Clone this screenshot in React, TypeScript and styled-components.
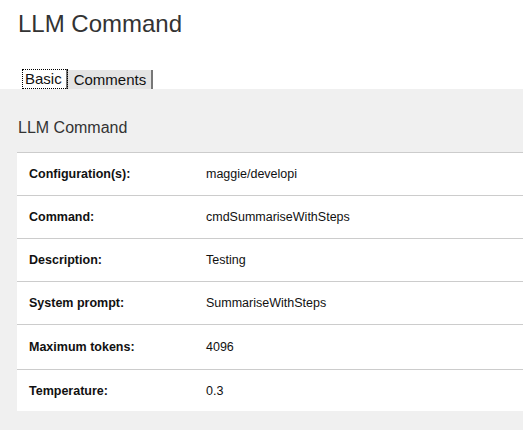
import styled, { createGlobalStyle } from 'styled-components';

const GlobalStyle = createGlobalStyle`
  html, body {
    margin: 0;
    padding: 0;
    background: #fff;
    font-family: "Liberation Sans", Arial, sans-serif;
    color: #222;
  }
`;

const rows = [
  { label: 'Configuration(s):', value: 'maggie/developi' },
  { label: 'Command:', value: 'cmdSummariseWithSteps' },
  { label: 'Description:', value: 'Testing' },
  { label: 'System prompt:', value: 'SummariseWithSteps' },
  { label: 'Maximum tokens:', value: '4096', tall: true },
  { label: 'Temperature:', value: '0.3' },
];

const App = () => {
  return (
    <Page>
      <GlobalStyle />
      <Title>LLM Command</Title>
      <TabBar>
        <Tab $active>Basic</Tab>
        <Tab>Comments</Tab>
      </TabBar>
      <Panel>
        <PanelTitle>LLM Command</PanelTitle>
        <Table>
          {rows.map((r) => (
            <Row key={r.label} $tall={r.tall}>
              <Label>{r.label}</Label>
              <Value>{r.value}</Value>
            </Row>
          ))}
        </Table>
      </Panel>
    </Page>
  );
};

export default App;

const Page = styled.div`
  width: 523px;
  height: 430px;
  overflow: hidden;
  display: flex;
  flex-direction: column;
`;

const Title = styled.h1`
  margin: 0;
  padding: 10px 0 0 18px;
  height: 32px;
  font-size: 24px;
  font-weight: normal;
  line-height: 28px;
  color: #333;
`;

const TabBar = styled.div`
  display: flex;
  padding: 27px 0 0 22px;
  height: 20px;
`;

const Tab = styled.div<{ $active?: boolean }>`
  height: 20px;
  box-sizing: border-box;
  padding: 0 ${(p) => (p.$active ? '4px' : '5px')} 0 ${(p) => (p.$active ? '3px' : '6px')};
  font-size: 15px;
  line-height: 20px;
  color: #111;
  background: ${(p) => (p.$active ? '#fff' : '#e4e4e4')};
  border-right: 2px solid #777;
  outline: ${(p) => (p.$active ? '1px dotted #000' : 'none')};
  outline-offset: -1px;
  margin-top: ${(p) => (p.$active ? '0' : '1px')};
`;

const Panel = styled.div`
  flex: 1;
  background: #f0f0f0;
  padding: 0 0 0 17px;
`;

const PanelTitle = styled.h2`
  margin: 0;
  padding: 30px 0 0 1px;
  height: 33px;
  font-size: 16px;
  font-weight: normal;
  line-height: 18px;
  color: #333;
`;

const Table = styled.div`
  background: #fff;
  border-top: 1px solid #ccc;
`;

const Row = styled.div<{ $tall?: boolean }>`
  display: grid;
  grid-template-columns: 177px 1fr;
  align-items: center;
  height: ${(p) => (p.$tall ? '44px' : '42px')};
  padding-left: 12px;
  border-bottom: 1px solid #ccc;
  font-size: 12.5px;

  &:last-child {
    border-bottom: none;
    height: 41px;
  }
`;

const Label = styled.div`
  font-weight: bold;
  color: #111;
`;

const Value = styled.div`
  color: #111;
`;
